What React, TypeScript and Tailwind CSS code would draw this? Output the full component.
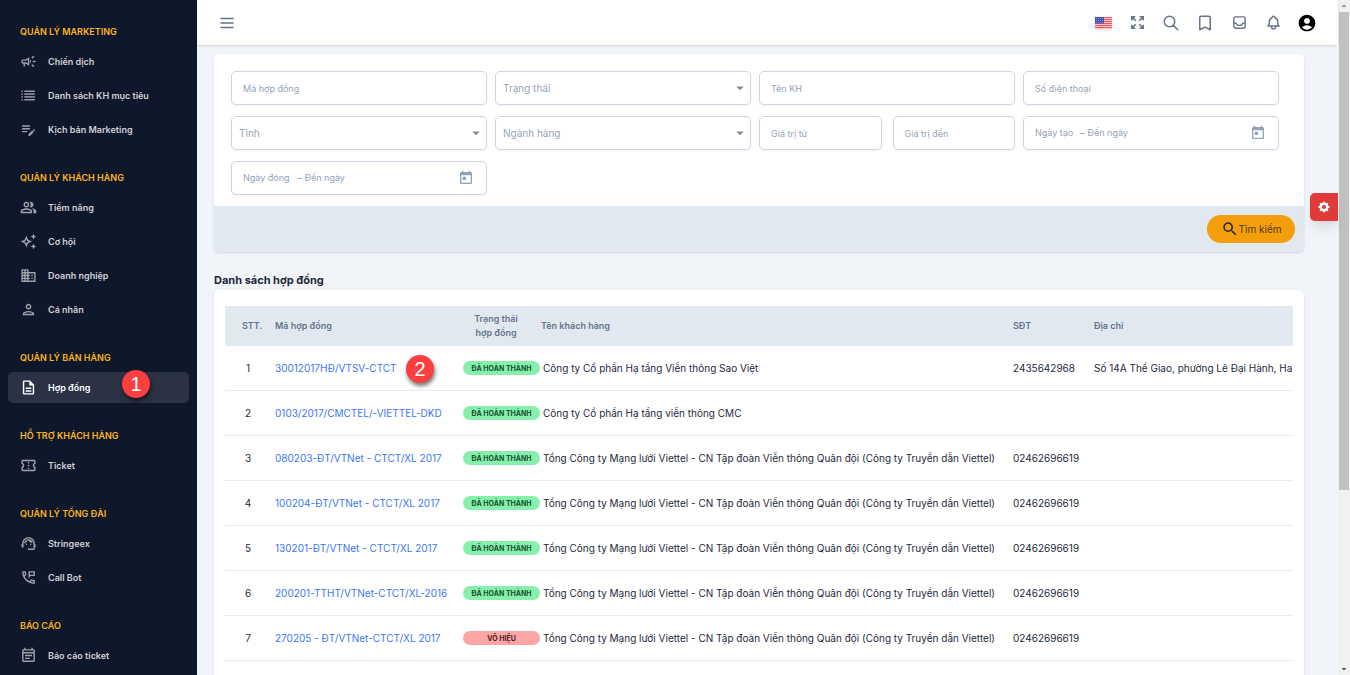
import type { ReactNode } from 'react';
import type { IconType } from 'react-icons';
import {
  MdAccountCircle,
  MdArrowDropDown,
  MdArrowDropUp,
  MdOutlineAutoAwesome,
  MdOutlineBusiness,
  MdOutlineCampaign,
  MdOutlineConfirmationNumber,
  MdOutlineDescription,
  MdOutlineEditNote,
  MdOutlineEventNote,
  MdOutlinePeopleAlt,
  MdOutlinePermPhoneMsg,
  MdOutlinePerson,
  MdOutlineSupportAgent,
  MdSearch,
  MdToday,
} from 'react-icons/md';
import {
  HiCog,
  HiOutlineBell,
  HiOutlineBookmark,
  HiOutlineInbox,
  HiOutlineMenu,
  HiOutlineSearch,
} from 'react-icons/hi';

type IconProps = { className?: string };
type NavItem = { label: string; icon: IconType; active?: boolean; step?: number };
type NavGroup = { title: string; items: NavItem[] };

function ListIcon({ className }: IconProps) {
  return (
    <svg viewBox="0 0 24 24" fill="currentColor" className={className}>
      {[5, 9, 13, 17].map((y) => (
        <g key={y}>
          <rect x="2" y={y} width="2" height="2" />
          <rect x="6" y={y} width="15" height="2" />
        </g>
      ))}
    </svg>
  );
}

function ExpandIcon({ className }: IconProps) {
  return (
    <svg viewBox="0 0 24 24" fill="none" stroke="currentColor" strokeWidth="2.2" className={className}>
      <path d="M4 9V4h5M4 4l5.5 5.5M15 4h5v5M20 4l-5.5 5.5M4 15v5h5M4 20l5.5-5.5M15 20h5v-5M20 20l-5.5-5.5" />
    </svg>
  );
}

const navigation: NavGroup[] = [
  {
    title: 'QUẢN LÝ MARKETING',
    items: [
      { label: 'Chiến dịch', icon: MdOutlineCampaign },
      { label: 'Danh sách KH mục tiêu', icon: ListIcon },
      { label: 'Kịch bản Marketing', icon: MdOutlineEditNote },
    ],
  },
  {
    title: 'QUẢN LÝ KHÁCH HÀNG',
    items: [
      { label: 'Tiềm năng', icon: MdOutlinePeopleAlt },
      { label: 'Cơ hội', icon: MdOutlineAutoAwesome },
      { label: 'Doanh nghiệp', icon: MdOutlineBusiness },
      { label: 'Cá nhân', icon: MdOutlinePerson },
    ],
  },
  {
    title: 'QUẢN LÝ BÁN HÀNG',
    items: [{ label: 'Hợp đồng', icon: MdOutlineDescription, active: true, step: 1 }],
  },
  {
    title: 'HỖ TRỢ KHÁCH HÀNG',
    items: [{ label: 'Ticket', icon: MdOutlineConfirmationNumber }],
  },
  {
    title: 'QUẢN LÝ TỔNG ĐÀI',
    items: [
      { label: 'Stringeex', icon: MdOutlineSupportAgent },
      { label: 'Call Bot', icon: MdOutlinePermPhoneMsg },
    ],
  },
  {
    title: 'BÁO CÁO',
    items: [{ label: 'Báo cáo ticket', icon: MdOutlineEventNote }],
  },
];

const viettel = 'Tổng Công ty Mạng lưới Viettel - CN Tập đoàn Viễn thông Quân đội (Công ty Truyền dẫn Viettel)';

const contracts = [
  {
    code: '30012017HĐ/VTSV-CTCT',
    done: true,
    customer: 'Công ty Cổ phần Hạ tầng Viễn thông Sao Việt',
    phone: '2435642968',
    address: 'Số 14A Thể Giao, phường Lê Đại Hành, Ha',
    step: 2,
  },
  { code: '0103/2017/CMCTEL/-VIETTEL-DKD', done: true, customer: 'Công ty Cổ phần Hạ tầng viễn thông CMC', phone: '', address: '' },
  { code: '080203-ĐT/VTNet - CTCT/XL 2017', done: true, customer: viettel, phone: '02462696619', address: '' },
  { code: '100204-ĐT/VTNet - CTCT/XL 2017', done: true, customer: viettel, phone: '02462696619', address: '' },
  { code: '130201-ĐT/VTNet - CTCT/XL 2017', done: true, customer: viettel, phone: '02462696619', address: '' },
  { code: '200201-TTHT/VTNet-CTCT/XL-2016', done: true, customer: viettel, phone: '02462696619', address: '' },
  { code: '270205 - ĐT/VTNet-CTCT/XL 2017', done: false, customer: viettel, phone: '02462696619', address: '' },
];

const fieldBox =
  'flex h-[34px] w-full min-w-0 items-center rounded-[5px] border border-[#cbd5e1] bg-white shadow-xs';

function StepMarker({ children, className }: { children: ReactNode; className: string }) {
  return (
    <span
      className={`absolute flex size-7 items-center justify-center rounded-full bg-[#fb3f41] font-['Liberation_Sans'] text-xl leading-none font-normal text-white shadow-[1px_3px_4px_rgba(0,0,0,0.55)] ${className}`}
    >
      {children}
    </span>
  );
}

function TextField({ label }: { label: string }) {
  return (
    <input
      type="text"
      aria-label={label}
      placeholder={label}
      className={`${fieldBox} px-[11px] text-[9px] text-slate-700 placeholder:text-[#94a3b8]`}
    />
  );
}

function SelectField({ label }: { label: string }) {
  return (
    <div className="relative">
      <select
        aria-label={label}
        defaultValue=""
        className={`${fieldBox} appearance-none pr-6 pl-[7px] text-[10px] text-[#94a3b8]`}
      >
        <option value="">{label}</option>
      </select>
      <MdArrowDropDown className="pointer-events-none absolute top-2 right-0.5 size-[18px] text-[#8a8a8a]" />
    </div>
  );
}

function DateRangeField({ from, to, fromWidth }: { from: string; to: string; fromWidth: string }) {
  return (
    <div className={`${fieldBox} pr-3 pl-[11px] text-[9px] text-[#94a3b8]`}>
      <input type="text" aria-label={from} placeholder={from} className={`${fromWidth} placeholder:text-[#94a3b8]`} />
      <span className="pr-[3px] font-semibold">–</span>
      <input type="text" aria-label={to} placeholder={to} className="min-w-0 flex-1 placeholder:text-[#94a3b8]" />
      <button type="button" aria-label={`Chọn ${from}`}>
        <MdToday className="size-4" />
      </button>
    </div>
  );
}

function Sidebar() {
  return (
    <aside className="w-[197px] shrink-0 overflow-hidden bg-[#0f172a] px-2 pt-6">
      <nav>
        {navigation.map((group) => (
          <section key={group.title} className="pb-[25px]">
            <h2 className="mb-1.5 pl-3 text-[9px] leading-4 font-semibold text-[#fbb41f]">{group.title}</h2>
            <ul className="flex flex-col gap-[3px]">
              {group.items.map(({ label, icon: Icon, active, step }) => (
                <li key={label} className="relative">
                  <a
                    href="#"
                    className={`flex h-[31px] items-center gap-[11px] rounded-[5px] pl-3 text-[9px] font-semibold ${
                      active ? 'bg-[#2b3244] text-white' : 'text-[#cfd1d4]'
                    }`}
                  >
                    <Icon className={`size-[17px] ${active ? 'text-white' : 'text-[#9fa2aa]'}`} />
                    {label}
                  </a>
                  {step && <StepMarker className="-top-0.5 left-[114px]">{step}</StepMarker>}
                </li>
              ))}
            </ul>
          </section>
        ))}
      </nav>
    </aside>
  );
}

function FlagIcon() {
  return (
    <svg viewBox="0 0 34 24" className="h-3 w-[17px] shadow-sm">
      <rect width="34" height="24" fill="#fff" />
      {[0, 4, 8, 12, 16, 20].map((y) => (
        <rect key={y} y={y} width="34" height="2.6" fill="#f0525a" />
      ))}
      <rect width="18" height="13" fill="#3f51b5" />
      {[2.5, 6.5, 10.5].map((y) =>
        [3, 7, 11, 15].map((x) => <circle key={`${x}-${y}`} cx={x} cy={y} r="0.8" fill="#e8eaf6" />)
      )}
    </svg>
  );
}

function HeaderButton({ label, children }: { label: string; children: ReactNode }) {
  return (
    <button type="button" aria-label={label} className="flex h-8 w-[34px] items-center justify-center">
      {children}
    </button>
  );
}

function Header() {
  return (
    <header className="z-10 flex h-[45px] shrink-0 items-center justify-between bg-white pr-3.5 pl-[13px] text-[#64748b] shadow">
      <HeaderButton label="Menu">
        <HiOutlineMenu className="size-[18px]" />
      </HeaderButton>
      <div className="flex">
        <HeaderButton label="Ngôn ngữ">
          <FlagIcon />
        </HeaderButton>
        <HeaderButton label="Toàn màn hình">
          <ExpandIcon className="size-[17px]" />
        </HeaderButton>
        <HeaderButton label="Tìm kiếm">
          <HiOutlineSearch className="size-[18px]" />
        </HeaderButton>
        <HeaderButton label="Đánh dấu">
          <HiOutlineBookmark className="size-[18px]" />
        </HeaderButton>
        <HeaderButton label="Hộp thư">
          <HiOutlineInbox className="size-[17px]" />
        </HeaderButton>
        <HeaderButton label="Thông báo">
          <HiOutlineBell className="size-[17px]" />
        </HeaderButton>
        <HeaderButton label="Tài khoản">
          <MdAccountCircle className="size-5 text-black" />
        </HeaderButton>
      </div>
    </header>
  );
}

function FilterCard() {
  return (
    <form className="overflow-hidden rounded-[5px] bg-white shadow">
      <div className="grid grid-cols-4 gap-x-2 gap-y-[11px] pt-[17px] pr-[25px] pb-[11px] pl-[17px]">
        <TextField label="Mã hợp đồng" />
        <SelectField label="Trạng thái" />
        <TextField label="Tên KH" />
        <TextField label="Số điện thoại" />
        <SelectField label="Tỉnh" />
        <SelectField label="Ngành hàng" />
        <div className="flex gap-[11px]">
          <TextField label="Giá trị từ" />
          <TextField label="Giá trị đến" />
        </div>
        <DateRangeField from="Ngày tạo" to="Đến ngày" fromWidth="w-[45px]" />
        <DateRangeField from="Ngày đóng" to="Đến ngày" fromWidth="w-[54px]" />
      </div>
      <div className="flex h-[46px] items-center justify-end bg-[#e2e8f0] px-[9px]">
        <button
          type="button"
          className="flex h-7 w-[88px] items-center justify-center rounded-full bg-[#f59e0b] text-[10px] text-[#4a3a1c]"
        >
          <MdSearch className="size-[18px] text-slate-800" />
          Tìm kiếm
        </button>
      </div>
    </form>
  );
}

function StatusBadge({ done }: { done: boolean }) {
  return (
    <span
      className={`flex h-3.5 w-[77px] items-center justify-center rounded-full pt-px text-[7px] leading-none font-bold whitespace-nowrap ${
        done ? 'bg-[#86efac] text-[#14532d]' : 'bg-[#fca5a5] text-[#4c1d24]'
      }`}
    >
      {done ? 'ĐÃ HOÀN THÀNH' : 'VÔ HIỆU'}
    </span>
  );
}

function ContractTable() {
  return (
    <div className="min-h-[400px] rounded-[5px] bg-white px-[11px] pt-4 shadow">
      <table className="w-full table-fixed border-separate border-spacing-0 text-left text-[10px] whitespace-nowrap text-[#1e293b]">
        <colgroup>
          <col className="w-[50px]" />
          <col className="w-[188px]" />
          <col className="w-[78px]" />
          <col className="w-[472px]" />
          <col className="w-[81px]" />
          <col />
        </colgroup>
        <thead>
          <tr className="h-10 bg-[#e2e8f0] text-[9px] leading-3.5 text-[#64748b]">
            <th className="pl-[17px] font-semibold">STT.</th>
            <th className="font-semibold">Mã hợp đồng</th>
            <th className="pr-3 text-center font-semibold">
              Trạng thái
              <br />
              hợp đồng
            </th>
            <th className="font-semibold">Tên khách hàng</th>
            <th className="font-semibold">SĐT</th>
            <th className="font-semibold">Địa chỉ</th>
          </tr>
        </thead>
        <tbody>
          {contracts.map((contract, index) => (
            <tr key={contract.code} className="h-[45px] [&>td]:border-b [&>td]:border-[#e6ebf2]">
              <td className="pr-1 text-center">{index + 1}</td>
              <td>
                <div className="relative">
                  <a href="#" className="text-[#3b76f6]">
                    {contract.code}
                  </a>
                  {contract.step && <StepMarker className="-top-1.5 left-[131px]">{contract.step}</StepMarker>}
                </div>
              </td>
              <td>
                <StatusBadge done={contract.done} />
              </td>
              <td className="pl-0.5">{contract.customer}</td>
              <td>{contract.phone}</td>
              <td>{contract.address}</td>
            </tr>
          ))}
        </tbody>
      </table>
    </div>
  );
}

function ScrollTrack() {
  return (
    <div aria-hidden className="flex w-3 shrink-0 flex-col items-center bg-[#f1f1f1] text-[#8b8b8b]">
      <MdArrowDropUp className="size-3 shrink-0" />
      <div className="w-2.5 flex-[478] bg-[#c1c1c1]" />
      <div className="flex-[173]" />
      <MdArrowDropDown className="size-3 shrink-0 text-[#505050]" />
    </div>
  );
}

export default function App() {
  return (
    <div className="flex h-screen overflow-hidden bg-[#f1f5f9] font-['Inter',sans-serif]">
      <Sidebar />
      <div className="relative flex min-w-0 flex-1 flex-col">
        <Header />
        <main className="min-h-0 flex-1 overflow-hidden pt-[9px] pr-[34px] pl-[17px]">
          <FilterCard />
          <h1 className="pt-5 pb-0.5 text-[11px] leading-4 font-bold text-[#1e293b]">Danh sách hợp đồng</h1>
          <ContractTable />
        </main>
        <button
          type="button"
          aria-label="Cài đặt"
          className="absolute top-[193px] right-0 flex size-7 items-center justify-center rounded-l-[5px] bg-[#e03a3a] text-white shadow-lg"
        >
          <HiCog className="size-3.5" />
        </button>
      </div>
      <ScrollTrack />
    </div>
  );
}
